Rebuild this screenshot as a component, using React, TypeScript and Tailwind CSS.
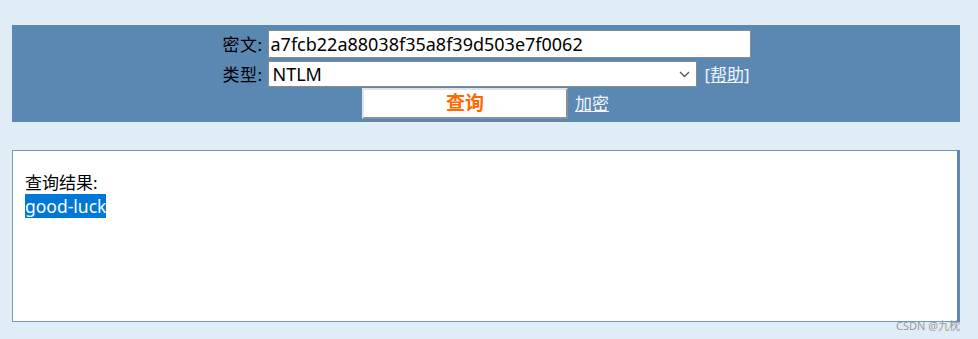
import React from "react";

const font = { fontFamily: '"Noto Sans", "Noto Sans CJK SC", sans-serif' };

export default function App() {
  return (
    <div
      className="relative w-[978px] h-[339px] bg-[#e1edf6] pt-[25px] pl-[12px] overflow-hidden"
      style={font}
    >
      <div className="w-[948px] h-[97px] bg-[#5b87b3] pt-[5px] flex flex-col items-center">
        <div className="w-[531px] flex flex-col gap-[3px] ml-[-2px]">
          <div className="flex items-center h-[28px]">
            <div className="w-[48px] text-right pr-[5px] text-[17px] text-black leading-none whitespace-nowrap tracking-[0.5px]">密文:</div>
            <input
              readOnly
              value="a7fcb22a88038f35a8f39d503e7f0062"
              className="w-[483px] h-[28px] bg-white border border-[#8a8a8a] px-[2px] text-[18px] text-black outline-none leading-none"
              style={font}
            />
          </div>
          <div className="flex items-center h-[26px]">
            <div className="w-[48px] text-right pr-[5px] text-[17px] text-black leading-none whitespace-nowrap tracking-[0.5px]">类型:</div>
            <div className="relative w-[429px] h-[26px] bg-white border border-[#8a8a8a] flex items-center pl-[4px] text-[18px] text-black">
              NTLM
              <svg
                className="absolute right-[6px] top-[9px]"
                width="11"
                height="7"
                viewBox="0 0 11 7"
                fill="none"
                stroke="#555"
                strokeWidth="1.3"
              >
                <path d="M1 1l4.5 4.5L10 1" />
              </svg>
            </div>
            <a className="ml-[8px] text-[17px] text-[#eef4fb] underline leading-none cursor-pointer whitespace-nowrap">[帮助]</a>
          </div>
        </div>
        <div className="flex items-center mt-[1px] ml-[-1px]">
          <button
            className="w-[206px] h-[31px] bg-white border-2 border-t-[#e3e3e3] border-l-[#e3e3e3] border-r-[#8f8f8f] border-b-[#8f8f8f] text-[19px] font-bold text-[#ff6a00] leading-none"
            style={font}
          >
            查询
          </button>
          <a className="ml-[7px] text-[17px] text-[#f2f6fb] underline leading-none cursor-pointer">加密</a>
        </div>
      </div>
      <div className="mt-[28px] w-[948px] h-[172px] bg-white border border-[#6f97c0] border-r-[3px] border-r-[#5f88b4] pl-[12px] pt-[20px]">
        <div className="text-[17px] text-black leading-[24px]">查询结果:</div>
        <div className="mt-[1px] text-[17.5px] leading-[20px]">
          <span className="bg-[#0078d7] text-white">good-luck</span>
        </div>
      </div>
      <div className="absolute left-[896px] top-[318px] text-[11px] text-[#9a9a9a]" style={font}>
        CSDN @九枕
      </div>
    </div>
  );
}
